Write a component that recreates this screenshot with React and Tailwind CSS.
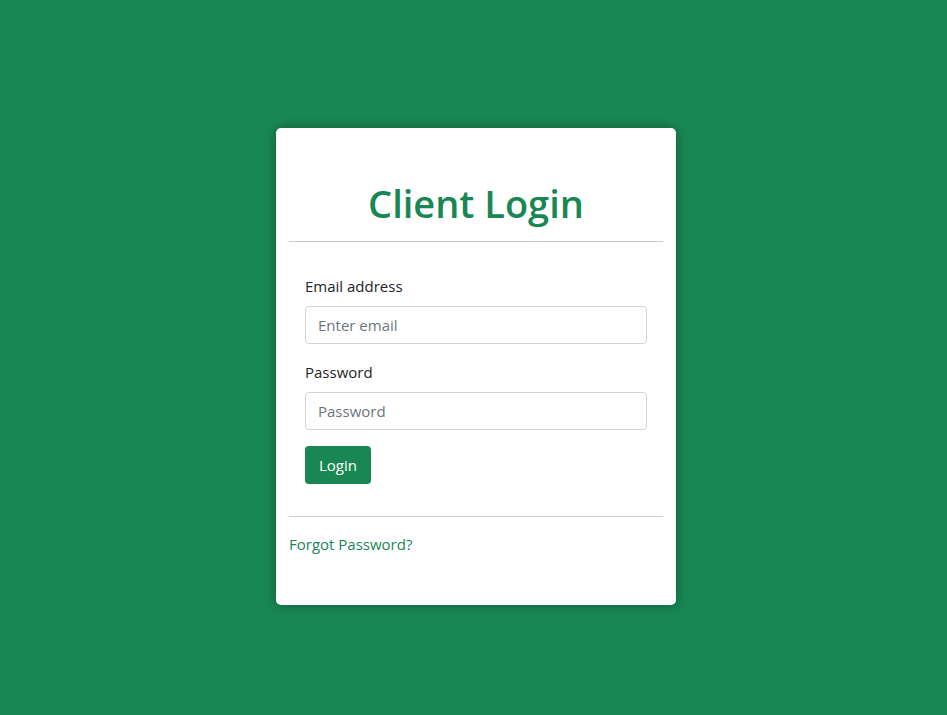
import React from "react";

export default function App() {
  return (
    <div
      className="min-h-screen w-full bg-[#198754] flex justify-center pt-[128px] pl-[5px]"
      style={{ fontFamily: '"Open Sans", "Noto Sans", sans-serif' }}
    >
      <div className="w-[400px] h-[477px] bg-white rounded-[5px] shadow-[0_0_12px_rgba(0,0,0,0.35)] px-[13px] self-start">
        <h1 className="mt-[51px] text-center text-[38px] leading-[48px] font-semibold text-[#198754]">
          Client Login
        </h1>
        <div className="mt-[14px] h-px bg-[#cccccc]" />
        <form className="px-4 pt-[32px]" onSubmit={(e) => e.preventDefault()}>
          <label className="block text-[15px] leading-6 text-[#212529] mb-2">Email address</label>
          <input
            type="email"
            placeholder="Enter email"
            className="block w-full h-[38px] px-3 border border-[#ced4da] rounded text-[15px] text-[#212529] placeholder:text-[#6c757d] outline-none"
          />
          <label className="block text-[15px] leading-6 text-[#212529] mt-4 mb-2">Password</label>
          <input
            type="password"
            placeholder="Password"
            className="block w-full h-[38px] px-3 border border-[#ced4da] rounded text-[15px] text-[#212529] placeholder:text-[#6c757d] outline-none"
          />
          <button
            type="submit"
            className="mt-4 h-[38px] px-[14px] bg-[#198754] text-white text-[15px] rounded"
          >
            Login
          </button>
        </form>
        <div className="mt-[32px] h-px bg-[#cccccc]" />
        <a href="#" className="block mt-[15px] text-[15px] leading-6 text-[#198754]">
          Forgot Password?
        </a>
      </div>
    </div>
  );
}
